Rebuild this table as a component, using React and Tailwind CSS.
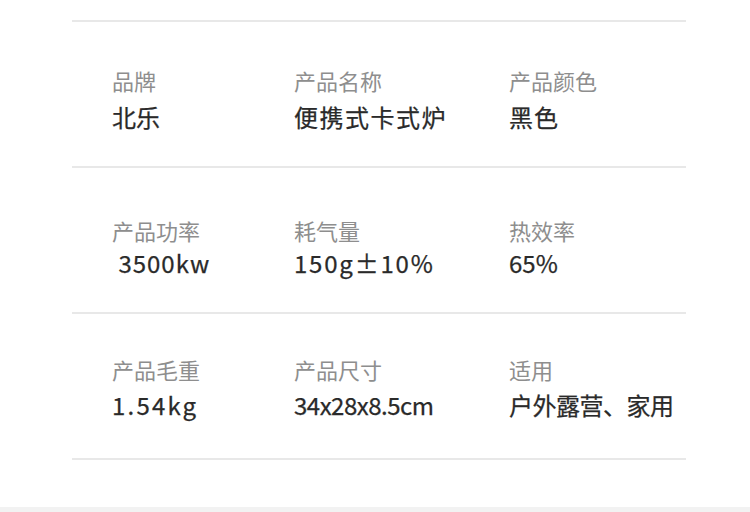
const rows = [
  {
    pad: "pt-[43px]",
    gap: "mt-[5px]",
    items: [
      { label: "品牌", value: "北乐", cls: "" },
      { label: "产品名称", value: "便携式卡式炉", cls: "tracking-[1.5px]" },
      { label: "产品颜色", value: "黑色", cls: "tracking-[1px]" },
    ],
  },
  {
    pad: "pt-[47px]",
    gap: "mt-[1px]",
    items: [
      { label: "产品功率", value: " 3500kw", cls: "tracking-[1px]" },
      { label: "耗气量", value: "150g±10%", cls: "tracking-[1.8px]" },
      { label: "热效率", value: "65%", cls: "" },
    ],
  },
  {
    pad: "pt-[40px]",
    gap: "mt-[4px]",
    items: [
      { label: "产品毛重", value: "1.54kg", cls: "tracking-[2.2px]" },
      { label: "产品尺寸", value: "34x28x8.5cm", cls: "tracking-[-0.5px]" },
      { label: "适用", value: "户外露营、家用", cls: "tracking-[-0.5px]" },
    ],
  },
]

const Line = () => <div className="h-[2px] bg-[#e8e8e8]" />

const Row = ({ row }) => {
  return (
    <div className={"h-[144px] pl-[40px] flex " + row.pad}>
      {row.items.map((item, i) => (
        <div
          key={i}
          className={
            i === 0 ? "w-[182px]" : i === 1 ? "w-[215px]" : "flex-1"
          }
        >
          <p className="text-[22px] leading-[30px] text-[#8e8e8e]">
            {item.label}
          </p>
          <p
            className={
              "text-[24px] leading-[34px] text-[#2a2a2a] [-webkit-text-stroke:0.25px_#2a2a2a] whitespace-pre " +
              row.gap +
              " " +
              item.cls
            }
          >
            {item.value}
          </p>
        </div>
      ))}
    </div>
  )
}

export default function App() {
  return (
    <div
      className="w-[750px] h-[512px] bg-white flex flex-col"
      style={{ fontFamily: '"Noto Sans CJK SC", "Noto Sans", sans-serif' }}
    >
      <div className="ml-[72px] w-[614px] mt-[20px]">
        <Line />
        {rows.map((row, i) => (
          <div key={i}>
            <Row row={row} />
            <Line />
          </div>
        ))}
      </div>
      <div className="flex-1" />
      <div className="h-[5px] bg-[#f2f2f2]" />
    </div>
  )
}
